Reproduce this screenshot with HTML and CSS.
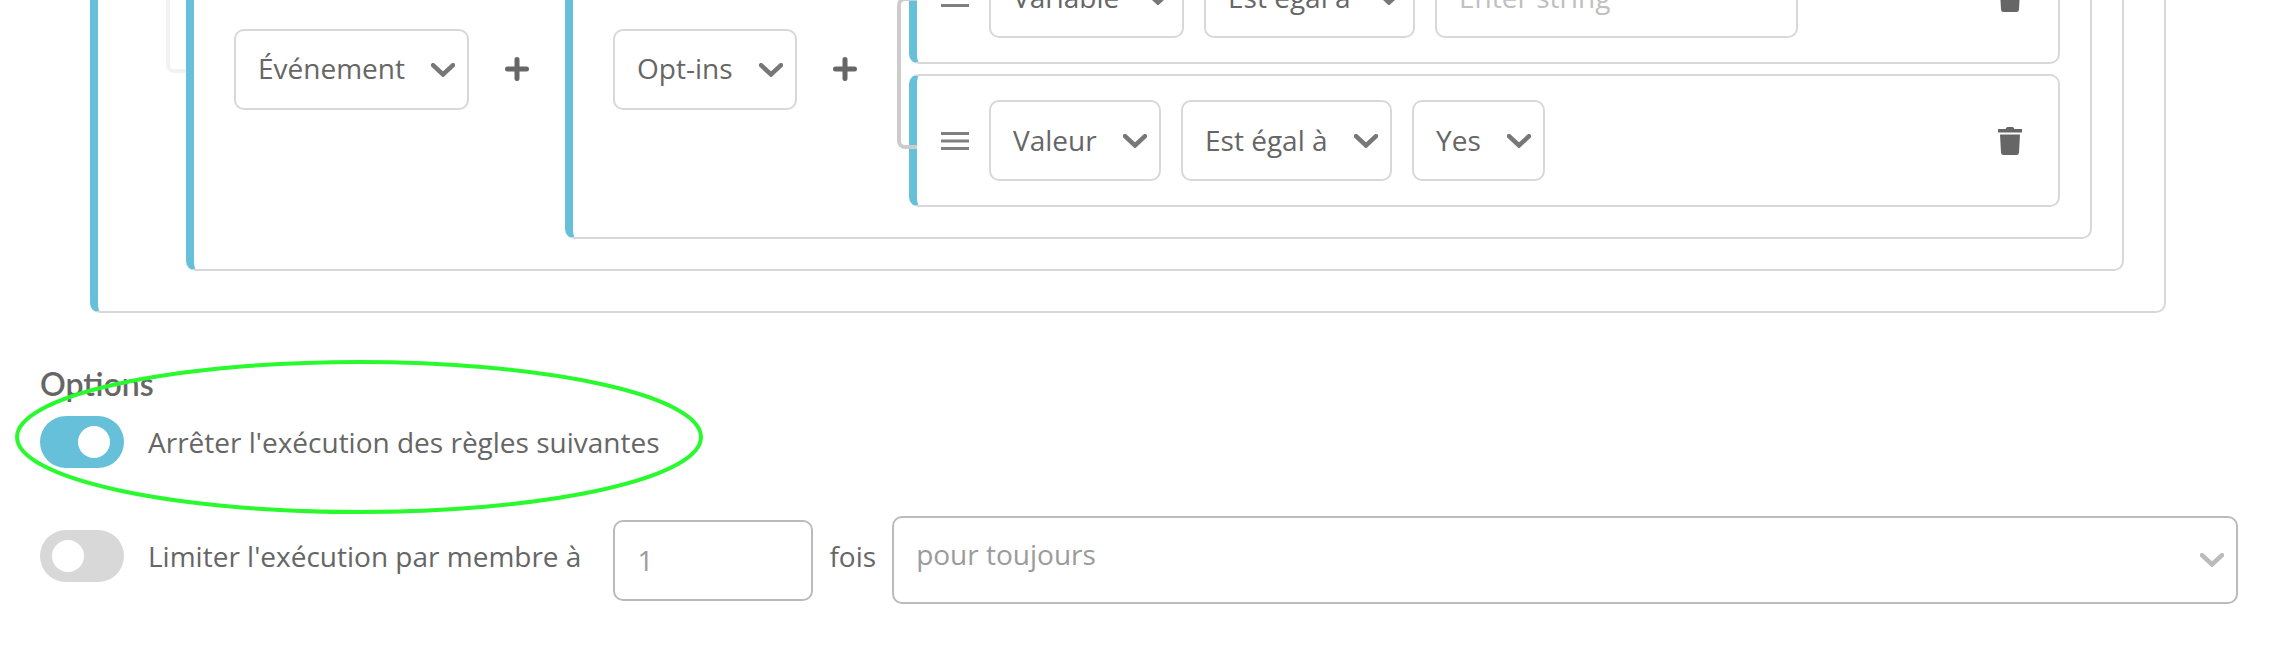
FILE: index.html
```
<!DOCTYPE html>
<html lang="fr">
<head>
    <meta charset="UTF-8">
    <meta name="viewport" content="width=device-width, initial-scale=1.0">
    <title>Règles</title>
    <link rel="stylesheet" href="styles.css">
</head>
<body>

<!-- Shared icons -->
<svg class="sprite" aria-hidden="true">
    <symbol id="chevron" viewBox="0 0 24 14">
        <path d="M2 2.200 L12 11.500 L22 2.200" fill="none" stroke="currentColor" stroke-width="4.500" stroke-linecap="round"/>
    </symbol>
    <symbol id="plus" viewBox="0 0 24 24">
        <path d="M12 2.500 V21.500 M2.500 12 H21.500" fill="none" stroke="currentColor" stroke-width="5" stroke-linecap="round"/>
    </symbol>
    <symbol id="handle" viewBox="0 0 28 18">
        <path d="M0 0h28v3H0z M0 7.500h28v3H0z M0 15h28v3H0z" fill="currentColor"/>
    </symbol>
    <symbol id="trash" viewBox="0 0 24 28">
        <path d="M0 2h7.500l1-1.500q.3-.5 1-.5h5q.7 0 1 .5l1 1.500H24v3.500H0z M2 7.500h20l-1 18q-.2 2.500-2.500 2.500h-13Q3.200 28 3 25.500z" fill="currentColor"/>
    </symbol>
</svg>

<main class="page">
    <section class="rules">
        <div class="group group-root">
            <div class="group group-event">
                <div class="select">
                    <select aria-label="Source"><option>Événement</option></select>
                    <svg class="chevron"><use href="#chevron"/></svg>
                </div>
                <button type="button" class="add" aria-label="Ajouter"><svg><use href="#plus"/></svg></button>

                <div class="group group-optins">
                    <div class="select">
                        <select aria-label="Champ"><option>Opt-ins</option></select>
                        <svg class="chevron"><use href="#chevron"/></svg>
                    </div>
                    <button type="button" class="add" aria-label="Ajouter"><svg><use href="#plus"/></svg></button>

                    <div class="conditions">
                        <div class="condition">
                            <svg class="handle"><use href="#handle"/></svg>
                            <div class="select">
                                <select aria-label="Propriété"><option>Variable</option></select>
                                <svg class="chevron"><use href="#chevron"/></svg>
                            </div>
                            <div class="select">
                                <select aria-label="Opérateur"><option>Est égal à</option></select>
                                <svg class="chevron"><use href="#chevron"/></svg>
                            </div>
                            <input type="text" class="text-input" placeholder="Enter string" aria-label="Texte">
                            <button type="button" class="delete" aria-label="Supprimer"><svg><use href="#trash"/></svg></button>
                        </div>
                        <div class="condition">
                            <svg class="handle"><use href="#handle"/></svg>
                            <div class="select">
                                <select aria-label="Propriété"><option>Valeur</option></select>
                                <svg class="chevron"><use href="#chevron"/></svg>
                            </div>
                            <div class="select">
                                <select aria-label="Opérateur"><option>Est égal à</option></select>
                                <svg class="chevron"><use href="#chevron"/></svg>
                            </div>
                            <div class="select">
                                <select aria-label="Valeur"><option>Yes</option></select>
                                <svg class="chevron"><use href="#chevron"/></svg>
                            </div>
                            <button type="button" class="delete" aria-label="Supprimer"><svg><use href="#trash"/></svg></button>
                        </div>
                    </div>
                </div>
            </div>
        </div>
    </section>

    <section class="options">
        <h2>Options</h2>
        <div class="option option-stop">
            <input type="checkbox" class="toggle" id="stop" checked>
            <label for="stop">Arrêter l'exécution des règles suivantes</label>
        </div>
        <div class="option option-limit">
            <input type="checkbox" class="toggle" id="limit">
            <label for="limit">Limiter l'exécution par membre à</label>
            <input type="text" class="count" id="count" placeholder="1" aria-label="Nombre">
            <label for="period">fois</label>
            <div class="select select-period">
                <select id="period"><option>pour toujours</option></select>
                <svg class="chevron"><use href="#chevron"/></svg>
            </div>
        </div>
        <svg class="highlight" viewBox="0 0 688 154" aria-hidden="true">
            <ellipse cx="344" cy="77" rx="342" ry="75" fill="none" stroke="#28fa2e" stroke-width="4"/>
        </svg>
    </section>
</main>

</body>
</html>
```
FILE: styles.css
```
*,
*::before {
    box-sizing: border-box;
}

body {
    margin: 0;
    background-color: #ffffff;
    color: #666666;
    font-family: "Open Sans", sans-serif;
    font-size: 28px;
    line-height: 40px;
}

.sprite {
    position: absolute;
    width: 0;
    height: 0;
}

.page {
    padding: 0 36px 0 40px;
}

/* The editor is scrolled: its first rows are above the window */
.rules {
    margin: -175px 72px 0 50px;
}

.group,
.condition {
    display: flex;
    align-items: center;
    border: 2px solid #d8d8d8;
    border-left: 8px solid #66c0da;
    border-radius: 10px;
}

.group {
    flex: 1;
    padding: 30px 30px 30px 40px;
}

.group-root {
    padding: 40px 40px 40px 88px;
}

.group-event {
    position: relative;
}

/* Brackets that tie sibling conditions together */
.group-event::before,
.conditions::before {
    content: "";
    position: absolute;
    border: 4px solid #f2f2f2;
    border-right: none;
    border-radius: 8px 0 0 8px;
}

.group-event::before {
    left: -28px;
    top: 0;
    width: 20px;
    height: 204px;
}

.conditions::before {
    left: 4px;
    top: 66px;
    width: 20px;
    height: 152px;
    border-color: #cccccc;
}

.conditions {
    position: relative;
    flex: 1;
    display: flex;
    flex-direction: column;
    gap: 10px;
    padding-left: 16px;
}

.condition {
    gap: 20px;
    padding: 24px 36px 24px 24px;
}

.select {
    position: relative;
}

select,
.text-input,
.count {
    height: 81px;
    border: 2px solid #d8d8d8;
    border-radius: 10px;
    background-color: #ffffff;
    color: #666666;
    font: inherit;
    outline: none;
}

select {
    display: block;
    appearance: none;
    padding: 0 62px 2px 22px;
}

.chevron {
    position: absolute;
    top: 34px;
    right: 14px;
    width: 24px;
    height: 14px;
    color: #777777;
    pointer-events: none;
}

.text-input {
    width: 363px;
    padding: 0 22px 2px;
}

::placeholder {
    color: #c0c0c0;
    opacity: 1;
}

button {
    padding: 0;
    border: none;
    background: none;
    color: #666666;
    cursor: pointer;
}

button svg {
    display: block;
    width: 24px;
    height: 24px;
}

.add {
    margin: 0 36px;
}

.delete {
    margin-left: auto;
}

.delete svg {
    height: 28px;
}

.handle {
    width: 28px;
    height: 18px;
    color: #808080;
}

.options {
    position: relative;
    padding-top: 51px;
}

h2 {
    margin: 0;
    font-family: Lato, "Open Sans", sans-serif;
    font-size: 32px;
    font-weight: 600;
    line-height: 40px;
}

.option {
    display: flex;
    align-items: center;
}

.option-stop {
    margin-top: 12px;
}

.option-limit {
    margin-top: 48px;
}

.option-limit label {
    padding-bottom: 8px;
}

.toggle {
    appearance: none;
    width: 84px;
    height: 52px;
    margin: 0 24px 0 0;
    padding: 10px 14px 10px 12px;
    border-radius: 26px;
    background-color: #d8d8d8;
}

.option-limit .toggle {
    margin-bottom: 8px;
}

.toggle::before {
    content: "";
    display: block;
    width: 32px;
    height: 32px;
    border-radius: 50%;
    background-color: #ffffff;
}

.toggle:checked {
    background-color: #66c0da;
}

.toggle:checked::before {
    margin-left: auto;
}

.count {
    width: 200px;
    margin: 0 16px 0 32px;
    padding: 0 22px;
    border-color: #bbbbbb;
}

.count::placeholder {
    color: #9b9b9b;
}

.select-period {
    flex: 1;
    margin-left: 16px;
}

.select-period select {
    width: 100%;
    height: 88px;
    padding-bottom: 12px;
    border-color: #bbbbbb;
    color: #9b9b9b;
}

.select-period .chevron {
    top: 37px;
    color: #bbbbbb;
}

/* Marker around the first option */
.highlight {
    position: absolute;
    top: 47px;
    left: -25px;
    width: 688px;
    height: 154px;
    pointer-events: none;
}
```
